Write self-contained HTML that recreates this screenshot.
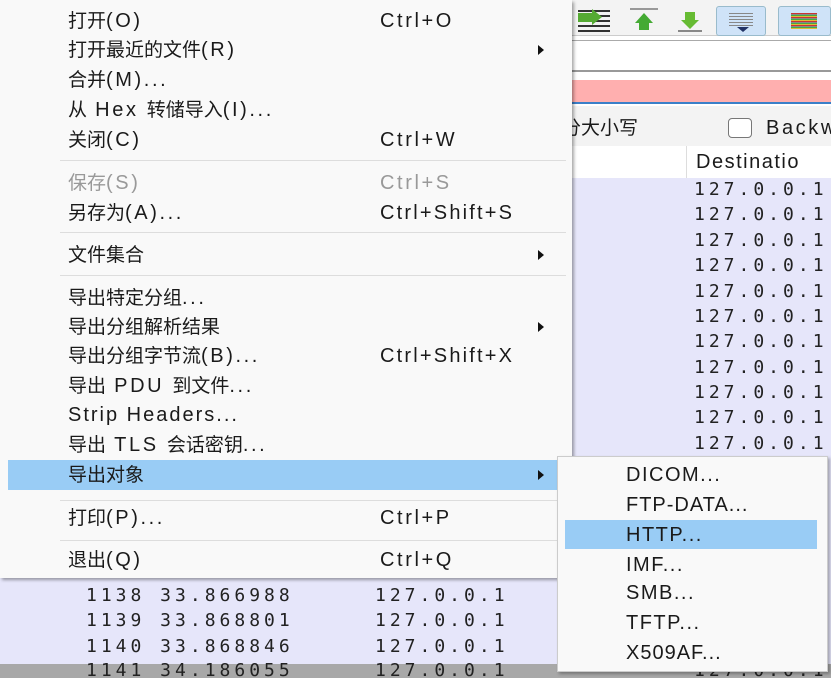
<!DOCTYPE html><html><head><meta charset="utf-8"><style>
*{margin:0;padding:0;box-sizing:border-box}
body{width:831px;height:678px;overflow:hidden;background:#fff;position:relative;font-family:"Liberation Sans","Noto Sans CJK SC",sans-serif;color:#1a1a1a}
.a{position:absolute}
.t{position:absolute;height:26px;line-height:26px;font-size:20px;letter-spacing:2.6px;white-space:nowrap}
.c{font-size:19px;letter-spacing:0px}
.m{font-family:"DejaVu Sans Mono","Liberation Mono",monospace;font-size:18px;letter-spacing:4px;position:absolute;white-space:nowrap;line-height:24px;height:24px;color:#222}
.sep{position:absolute;left:60px;width:506px;height:1px;background:#ddd}
.arr{position:absolute;left:538px;width:0;height:0;border-left:6px solid #111;border-top:5px solid transparent;border-bottom:5px solid transparent}
.g{color:#999}
</style></head><body>
<div class="a" style="left:572px;top:0;width:259px;height:36px;background:#f3f3f3;border-bottom:1px solid #ccc"></div>
<div class="a" style="left:578px;top:10px;width:32px;height:22px;background:repeating-linear-gradient(#333 0 2px,transparent 2px 5px)"></div>
<div class="a" style="left:578px;top:13px;width:16px;height:9px;background:#5a3"></div>
<div class="a" style="left:592px;top:9px;border-top:8px solid transparent;border-bottom:8px solid transparent;border-left:10px solid #5a3"></div>
<div class="a" style="left:630px;top:10px;width:28px;height:22px;"><div class="a" style="left:5px;top:3px;border-left:9px solid transparent;border-right:9px solid transparent;border-bottom:10px solid #4a3"></div><div class="a" style="left:9px;top:12px;width:10px;height:8px;background:#4a3"></div><div class="a" style="left:0;top:-2px;width:28px;height:2px;background:#999"></div></div>
<div class="a" style="left:676px;top:10px;width:28px;height:22px;"><div class="a" style="left:9px;top:2px;width:10px;height:8px;background:#6b3"></div><div class="a" style="left:5px;top:10px;border-left:9px solid transparent;border-right:9px solid transparent;border-top:9px solid #6b3"></div><div class="a" style="left:2px;top:20px;width:24px;height:2px;background:#888"></div></div>
<div class="a" style="left:716px;top:6px;width:50px;height:30px;background:#cfe3f8;border:1px solid #9bc;border-radius:3px"><div class="a" style="left:12px;top:6px;width:24px;height:14px;background:repeating-linear-gradient(#888 0 1px,transparent 1px 3px)"></div><div class="a" style="left:20px;top:20px;border-left:6px solid transparent;border-right:6px solid transparent;border-top:5px solid #236"></div></div>
<div class="a" style="left:778px;top:6px;width:53px;height:30px;background:#cfe3f8;border:1px solid #9bc;border-radius:3px"><div class="a" style="left:12px;top:6px;width:26px;height:16px;background:repeating-linear-gradient(#c33 0 1px,#888 1px 2px,#4a4 2px 3px,#db3 3px 4px)"></div></div>
<div class="a" style="left:572px;top:40px;width:259px;height:32px;background:#fff;border-top:1px solid #aaa;border-bottom:2px solid #999"></div>
<div class="a" style="left:572px;top:80px;width:259px;height:24px;background:#ffafaf;border-bottom:2px solid #3a7fc8"></div>
<div class="a" style="left:572px;top:106px;width:259px;height:44px;background:#f3f3f3"></div>
<div class="t" style="left:562px;top:115px"><span class="c">分大小写</span></div>
<div class="a" style="left:728px;top:118px;width:24px;height:20px;border:1px solid #777;border-radius:4px;background:#fff"></div>
<div class="t" style="left:766px;top:115px">Backw</div>
<div class="a" style="left:572px;top:146px;width:259px;height:32px;background:#fff"></div>
<div class="a" style="left:686px;top:146px;width:1px;height:32px;background:#ddd"></div>
<div class="t" style="left:696px;top:149px;letter-spacing:1.5px">Destinatio</div>
<div class="a" style="left:572px;top:178px;width:259px;height:400px;background:#e6e6fa"></div>
<div class="m" style="left:694px;top:178px">127.0.0.1</div>
<div class="m" style="left:694px;top:203px">127.0.0.1</div>
<div class="m" style="left:694px;top:229px">127.0.0.1</div>
<div class="m" style="left:694px;top:254px">127.0.0.1</div>
<div class="m" style="left:694px;top:280px">127.0.0.1</div>
<div class="m" style="left:694px;top:305px">127.0.0.1</div>
<div class="m" style="left:694px;top:330px">127.0.0.1</div>
<div class="m" style="left:694px;top:356px">127.0.0.1</div>
<div class="m" style="left:694px;top:381px">127.0.0.1</div>
<div class="m" style="left:694px;top:406px">127.0.0.1</div>
<div class="m" style="left:694px;top:432px">127.0.0.1</div>
<div class="a" style="left:0;top:578px;width:831px;height:86px;background:#e6e6fa"></div>
<div class="a" style="left:0;top:664px;width:831px;height:14px;background:#a8a8a8"></div>
<div class="m" style="left:86px;top:584px">1138 33.866988</div><div class="m" style="left:375px;top:584px">127.0.0.1</div>
<div class="m" style="left:86px;top:609px">1139 33.868801</div><div class="m" style="left:375px;top:609px">127.0.0.1</div>
<div class="m" style="left:86px;top:635px">1140 33.868846</div><div class="m" style="left:375px;top:635px">127.0.0.1</div>
<div class="m" style="left:86px;top:659px">1141 34.186055</div><div class="m" style="left:375px;top:659px">127.0.0.1</div>
<div class="m" style="left:694px;top:659px">127.0.0.1</div>
<div class="a" style="left:0;top:0;width:572px;height:578px;background:#f9f9f9;box-shadow:2px 2px 3px rgba(0,0,0,.35)"></div>
<div class="a" style="left:8px;top:460px;width:549px;height:30px;background:#99ccf5"></div>
<div class="sep" style="top:160px"></div><div class="sep" style="top:232px"></div><div class="sep" style="top:275px"></div><div class="sep" style="top:500px"></div><div class="sep" style="top:540px"></div>
<div class="t" style="left:68px;top:8px"><span class="c">打开</span>(O)</div><div class="t" style="left:380px;top:8px">Ctrl+O</div>
<div class="t" style="left:68px;top:37px"><span class="c">打开最近的文件</span>(R)</div><div class="arr" style="top:45px"></div>
<div class="t" style="left:68px;top:67px"><span class="c">合并</span>(M)...</div>
<div class="t" style="left:68px;top:97px"><span class="c">从</span> Hex <span class="c">转储导入</span>(I)...</div>
<div class="t" style="left:68px;top:127px"><span class="c">关闭</span>(C)</div><div class="t" style="left:380px;top:127px">Ctrl+W</div>
<div class="t g" style="left:68px;top:170px"><span class="c">保存</span>(S)</div><div class="t g" style="left:380px;top:170px">Ctrl+S</div>
<div class="t" style="left:68px;top:200px"><span class="c">另存为</span>(A)...</div><div class="t" style="left:380px;top:200px;letter-spacing:2.2px">Ctrl+Shift+S</div>
<div class="t" style="left:68px;top:242px"><span class="c">文件集合</span></div><div class="arr" style="top:250px"></div>
<div class="t" style="left:68px;top:285px"><span class="c">导出特定分组</span>...</div>
<div class="t" style="left:68px;top:314px"><span class="c">导出分组解析结果</span></div><div class="arr" style="top:322px"></div>
<div class="t" style="left:68px;top:343px"><span class="c">导出分组字节流</span>(B)...</div><div class="t" style="left:380px;top:343px;letter-spacing:2.2px">Ctrl+Shift+X</div>
<div class="t" style="left:68px;top:373px"><span class="c">导出</span> PDU <span class="c">到文件</span>...</div>
<div class="t" style="left:68px;top:402px;letter-spacing:2px">Strip Headers...</div>
<div class="t" style="left:68px;top:432px"><span class="c">导出</span> TLS <span class="c">会话密钥</span>...</div>
<div class="t" style="left:68px;top:462px"><span class="c">导出对象</span></div><div class="arr" style="top:470px"></div>
<div class="t" style="left:68px;top:505px"><span class="c">打印</span>(P)...</div><div class="t" style="left:380px;top:505px">Ctrl+P</div>
<div class="t" style="left:68px;top:547px"><span class="c">退出</span>(Q)</div><div class="t" style="left:380px;top:547px">Ctrl+Q</div>
<div class="a" style="left:557px;top:456px;width:271px;height:216px;background:#f9f9f9;border:1px solid #ccc;box-shadow:2px 2px 3px rgba(0,0,0,.3)"></div>
<div class="a" style="left:565px;top:520px;width:252px;height:29px;background:#99ccf5"></div>
<div class="t" style="left:626px;top:462px;letter-spacing:1.5px">DICOM...</div>
<div class="t" style="left:626px;top:492px;letter-spacing:1px">FTP-DATA...</div>
<div class="t" style="left:626px;top:522px;letter-spacing:1.5px">HTTP...</div>
<div class="t" style="left:626px;top:552px;letter-spacing:1.5px">IMF...</div>
<div class="t" style="left:626px;top:580px;letter-spacing:1.5px">SMB...</div>
<div class="t" style="left:626px;top:610px;letter-spacing:1.5px">TFTP...</div>
<div class="t" style="left:626px;top:640px;letter-spacing:1px">X509AF...</div>
</body></html>
